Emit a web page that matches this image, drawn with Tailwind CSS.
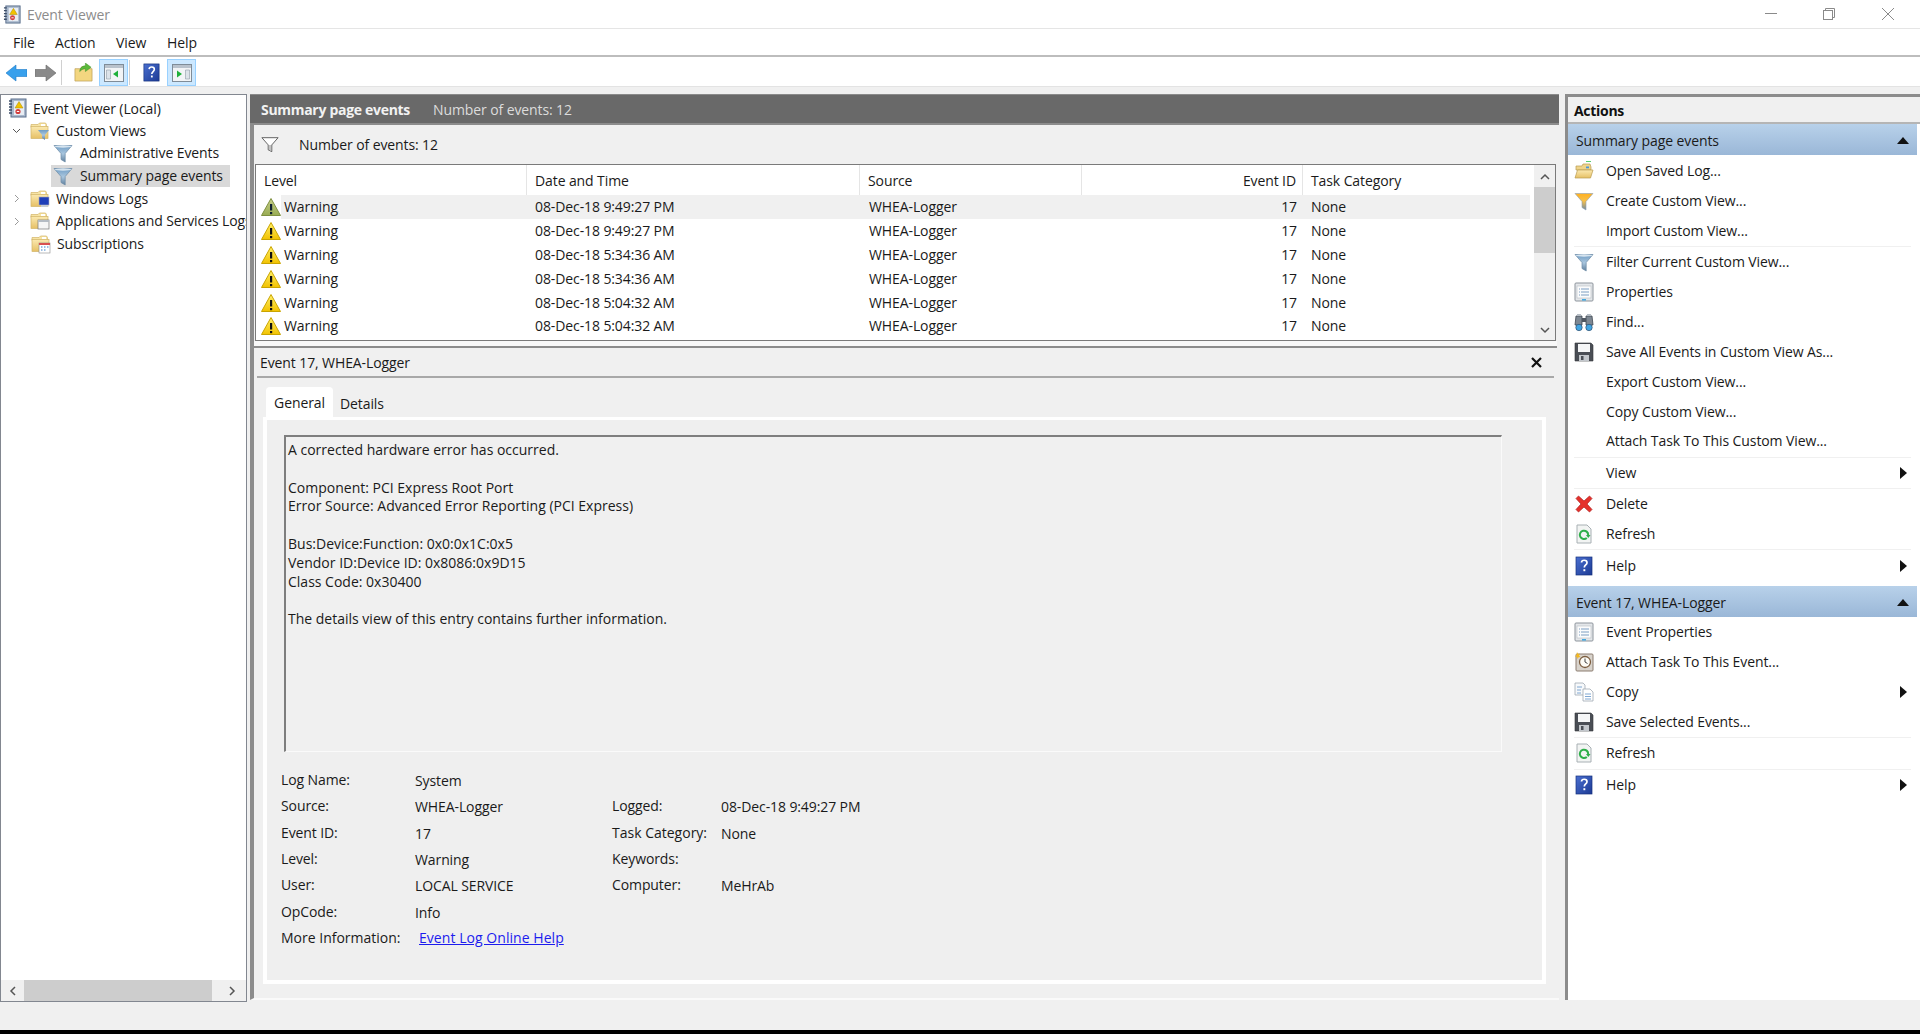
<!DOCTYPE html>
<html lang="en">
<head>
    <meta charset="UTF-8">
    <meta name="viewport" content="width=device-width, initial-scale=1.0">
    <script src="https://cdn.jsdelivr.net/npm/@tailwindcss/browser@4"></script>
    <title>Event Viewer</title>
</head>
<body class="h-screen w-screen overflow-hidden flex flex-col bg-[#f0f0f0] text-[14px] leading-none tracking-[-0.1px] text-[#1a1a1a] font-['Open_Sans','Liberation_Sans',sans-serif]">

    <svg class="absolute w-0 h-0">
        <defs>
            <linearGradient id="gFunnel" x1="0" y1="0" x2="0" y2="1"><stop offset="0" stop-color="#6f9cc4"/><stop offset="0.5" stop-color="#a9c6de"/><stop offset="1" stop-color="#5f7f9c"/></linearGradient>
            <linearGradient id="gOrange" x1="0" y1="0" x2="0" y2="1"><stop offset="0" stop-color="#ffb020"/><stop offset="0.45" stop-color="#f7c04a"/><stop offset="1" stop-color="#6f8aa5"/></linearGradient>
            <linearGradient id="gFolder" x1="0" y1="0" x2="0" y2="1"><stop offset="0" stop-color="#fbe9b0"/><stop offset="1" stop-color="#e6c065"/></linearGradient>
            <linearGradient id="gWarn" x1="0" y1="0" x2="0" y2="1"><stop offset="0" stop-color="#fff06a"/><stop offset="1" stop-color="#f2c200"/></linearGradient>
            <linearGradient id="gWarnSel" x1="0" y1="0" x2="0" y2="1"><stop offset="0" stop-color="#c7cf8a"/><stop offset="1" stop-color="#98ab52"/></linearGradient>
            <linearGradient id="gHelp" x1="0" y1="0" x2="1" y2="1"><stop offset="0" stop-color="#4a6fd0"/><stop offset="1" stop-color="#1c3a94"/></linearGradient>
        </defs>
        <symbol id="warn" viewBox="0 0 20 20"><path d="M10 1.5 19.5 18.5H.5z" fill="url(#gWarn)" stroke="#c9a400"/><rect x="9" y="7" width="2.2" height="6.5" fill="#111"/><rect x="9" y="15" width="2.2" height="2.2" fill="#111"/></symbol>
        <symbol id="warnSel" viewBox="0 0 20 20"><path d="M10 1.5 19.5 18.5H.5z" fill="url(#gWarnSel)" stroke="#7f9040"/><rect x="9" y="7" width="2.2" height="6.5" fill="#123"/><rect x="9" y="15" width="2.2" height="2.2" fill="#123"/></symbol>
        <symbol id="funnel" viewBox="0 0 20 20"><path d="M1 2.5h18L12.2 10.5v8.500L8 16.500v-6z" fill="url(#gFunnel)" stroke="#6d8ba6" stroke-width=".7"/><ellipse cx="10" cy="3.5" rx="8.5" ry="1.2" fill="#d6e4ef"/></symbol>
        <symbol id="funnelNew" viewBox="0 0 20 20"><path d="M1 2.5h18L12 10.5v8.500L8 16.500v-6z" fill="url(#gOrange)" stroke="#8ba0b5" stroke-width=".6"/></symbol>
        <symbol id="funnelOut" viewBox="0 0 20 20"><path d="M1 3h18L12 11v7.500L8 16.500V11z" fill="#fff" stroke="#555"/><path d="M10 11v6" stroke="#bbb" stroke-width="2"/></symbol>
        <symbol id="folder" viewBox="0 0 20 20"><path d="M1 3.5h7l1.500-1.500h6l1 1.500v3H1z" fill="#f7e4a4" stroke="#d2b468" stroke-width=".7"/><rect x="1" y="5.5" width="17" height="12" fill="url(#gFolder)" stroke="#d2b468" stroke-width=".7"/><rect x="11" y="3" width="4" height="2" fill="#fff"/></symbol>
        <symbol id="book" viewBox="0 0 20 20"><rect x="3" y="1" width="15" height="18" fill="#a9b8cc" stroke="#5b6f8c"/><rect x="6" y="3" width="10" height="14" fill="#e8edf3"/><path d="M1 3h3M1 6h3M1 9h3M1 12h3M1 15h3" stroke="#3c4e68" stroke-width="1.4"/><path d="M11 3.5 15 10H7z" fill="#f2c200" stroke="#a88700" stroke-width=".5"/><circle cx="10" cy="13.5" r="2.6" fill="#d23c3c"/><rect x="8.8" y="13" width="2.4" height="1" fill="#fff"/></symbol>
        <symbol id="help" viewBox="0 0 20 20"><rect x="2" y="1" width="16" height="18" fill="url(#gHelp)" stroke="#14307c" stroke-width=".7"/><path d="M7.5 6.5c.2-3 5.5-3 5.500.2 0 2.300-2.700 2.300-2.700 4.800" fill="none" stroke="#fff" stroke-width="1.7"/><rect x="9.4" y="13.2" width="1.9" height="2" fill="#fff"/></symbol>
        <symbol id="props" viewBox="0 0 20 20"><rect x="1" y="1" width="18" height="18" rx="1" fill="#e4e7ea" stroke="#8d949c"/><rect x="3" y="4" width="14" height="12" fill="#fbfcfd" stroke="#b7bdc4" stroke-width=".6"/><path d="M5 7h1M7 7h8M5 10h1M7 10h8M5 13h1M7 13h8" stroke="#6e94bb" stroke-width=".9"/><rect x="8" y="17" width="4" height="1.6" fill="#46a9e0"/></symbol>
        <symbol id="find" viewBox="0 0 20 20"><path d="M2 4h6v9H1z M12 4h6l1 9h-7z" fill="#7d8792" stroke="#3e4650" stroke-width=".8"/><rect x="8" y="6" width="4" height="4" fill="#4e5660"/><circle cx="5" cy="15.5" r="3.2" fill="#42a5e2" stroke="#2e4e6e" stroke-width=".7"/><circle cx="15" cy="15.5" r="3.2" fill="#42a5e2" stroke="#2e4e6e" stroke-width=".7"/><rect x="3" y="2" width="4" height="2" fill="#b5bcc4"/><rect x="13" y="2" width="4" height="2" fill="#b5bcc4"/></symbol>
        <symbol id="save" viewBox="0 0 20 20"><path d="M1 1h16l2 2v16H1z" fill="#4a4e55" stroke="#33363b" stroke-width=".6"/><rect x="4" y="2" width="12" height="8" fill="#f5f6f7"/><rect x="5" y="13" width="10" height="6" fill="#c3c7cc"/><rect x="7" y="14" width="2.5" height="4" fill="#4a4e55"/></symbol>
        <symbol id="open" viewBox="0 0 20 20"><path d="M2 5h6l1-2h7l1 3v3H2z" fill="#efd48a" stroke="#b99b50" stroke-width=".7"/><path d="M3.5 9H19l-2.500 8H1z" fill="url(#gFolder)" stroke="#b99b50" stroke-width=".7"/><rect x="12" y="5.5" width="3" height="1.8" fill="#4a97d8"/><rect x="12" y="0" width="5" height="1" fill="#55d070"/></symbol>
        <symbol id="del" viewBox="0 0 20 20"><path d="M2 4.5 4.500 2 10 7l5.500-5L18 4.500 13 10l5 5.500L15.500 18 10 13l-5.500 5L2 15.500 7 10z" fill="#e5312c" stroke="#b02020" stroke-width=".7"/></symbol>
        <symbol id="refresh" viewBox="0 0 20 20"><path d="M3 1h10l4 4v14H3z" fill="#f2f4f3" stroke="#a8b0b4"/><path d="M12.800 14a4.200 4.200 0 1 1 1.400-3" fill="none" stroke="#2fae4a" stroke-width="2"/><path d="M12 11h4.500l-2.200 3z" fill="#2fae4a"/></symbol>
        <symbol id="task" viewBox="0 0 20 20"><rect x="2" y="2" width="17" height="17" rx="1" fill="#d8d3cc" stroke="#8c7d70"/><circle cx="11" cy="10" r="5.5" fill="#fdfcf6" stroke="#7d5e40" stroke-width="1.3"/><path d="M11 6.500V10l2.500 1.500" fill="none" stroke="#444" stroke-width="1"/><path d="M3 0l1 2 2-.5-1 2 1.500 1.500-2 .2L3.500 7 3 4.800 1 4.500l1.500-1.500z" fill="#f3b820"/></symbol>
        <symbol id="copy" viewBox="0 0 20 20"><path d="M1 1h8l2 2v10H1z" fill="#f7f9fb" stroke="#9fa8b2" stroke-width=".8"/><path d="M9 7h7l3 3v9H9z" fill="#fff" stroke="#9fa8b2" stroke-width=".8"/><path d="M3 5h5M3 8h4M3 11h4M11 12h6M11 14.500h6M11 17h6" stroke="#5f92c8" stroke-width=".8"/></symbol>
        <symbol id="up" viewBox="0 0 20 20"><path d="M1 6h6l1-2h6l1 2h4v13H1z" fill="#f3d680" stroke="#b99b50" stroke-width=".7"/><path d="M6 9c0-4 3-6 6-6V0l6 4.500L12 9V6c-2 0-4 1-6 3z" fill="#5cba3a" stroke="#3c8a28" stroke-width=".5"/></symbol>
        <symbol id="paneL" viewBox="0 0 20 20"><rect x=".5" y="1.5" width="19" height="17" fill="#f2f4f6" stroke="#7f8c98"/><rect x="1" y="2" width="18" height="3" fill="#b9c2cc"/><path d="M2.500 7h4v9h-4z" fill="#dde3e9" stroke="#7f8c98" stroke-width=".5"/><path d="M14 7.500v7l-5-3.500z" fill="#1fb03a"/></symbol>
        <symbol id="paneR" viewBox="0 0 20 20"><rect x=".5" y="1.5" width="19" height="17" fill="#f2f4f6" stroke="#7f8c98"/><rect x="1" y="2" width="18" height="3" fill="#b9c2cc"/><path d="M13.500 7h4v9h-4z" fill="#dde3e9" stroke="#7f8c98" stroke-width=".5"/><path d="M5 7.500v7l5-3.500z" fill="#1fb03a"/></symbol>
        <symbol id="winlog" viewBox="0 0 20 20"><use href="#folder"/><rect x="9" y="8" width="10" height="8" fill="#1f3fb8" stroke="#aab" stroke-width=".6"/><path d="M11 16h7v2h-7z" fill="#c7ccd2"/></symbol>
        <symbol id="applog" viewBox="0 0 20 20"><use href="#folder"/><rect x="8" y="9" width="11" height="9" fill="#f6f6f6" stroke="#777" stroke-width=".7"/><rect x="8" y="9" width="11" height="2" fill="#b5bcc4"/></symbol>
        <symbol id="sublog" viewBox="0 0 20 20"><use href="#folder"/><rect x="8" y="9" width="11" height="10" fill="#fff" stroke="#8a8a8a" stroke-width=".6"/><rect x="8" y="9" width="11" height="2" fill="#d95050"/><path d="M10 13h1.500M13 13h1.500M16 13h1.500M10 16h1.500M13 16h1.500" stroke="#3a7fc8" stroke-width="1.2"/></symbol>
        <symbol id="customlog" viewBox="0 0 20 20"><use href="#folder"/><path d="M8 9h11l-4 5v5l-3-2v-3z" fill="url(#gFunnel)"/></symbol>
    </svg>

    <!-- title bar -->
    <header class="h-[29px] shrink-0 bg-white border-b border-[#e5e5e5] flex items-center">
        <svg class="w-[19px] h-[19px] ml-[3px]"><use href="#book"/></svg>
        <span class="ml-[5px] mt-[2px] text-[14px] text-[#8c8c8c]">Event Viewer</span>
        <div class="ml-auto flex items-center">
            <svg class="w-[12px] h-[12px] mr-[46px]" viewBox="0 0 12 12"><path d="M0 5.500h12" stroke="#8a8a8a"/></svg>
            <svg class="w-[12px] h-[12px] mr-[47px]" viewBox="0 0 12 12" fill="none" stroke="#8a8a8a"><rect x=".5" y="2.5" width="9" height="9"/><path d="M2.500 2.500v-2h9v9h-2"/></svg>
            <svg class="w-[12px] h-[12px] mr-[26px]" viewBox="0 0 12 12"><path d="M0 0l12 12M12 0L0 12" stroke="#8a8a8a"/></svg>
        </div>
    </header>

    <!-- menu -->
    <nav class="h-[28px] shrink-0 bg-white border-b-2 border-[#bdbdbd] flex items-center text-[14px] pt-[1px]">
        <span class="ml-[13px] w-[42px]">File</span>
        <span class="w-[61px]">Action</span>
        <span class="w-[51px]">View</span>
        <span>Help</span>
    </nav>

    <!-- toolbar -->
    <div class="h-[30px] shrink-0 bg-white border-b border-[#e3e3e3] flex items-center pt-[2px]">
        <svg class="w-[21px] h-[18px] ml-[6px]" viewBox="0 0 21 18"><path d="M0 9 10 1v4.500h11v7H10V17z" fill="#38a0ec" stroke="#1b78c8" stroke-width=".6"/></svg>
        <svg class="w-[21px] h-[18px] ml-[8px]" viewBox="0 0 21 18"><path d="M21 9 11 1v4.500H0v7h11V17z" fill="#8a8a8a" stroke="#666" stroke-width=".6"/></svg>
        <div class="w-px h-[25px] bg-[#d0d0d0] ml-[5px]"></div>
        <svg class="w-[19px] h-[19px] ml-[12px]"><use href="#up"/></svg>
        <div class="w-[29px] h-[27px] ml-[6px] bg-[#cce8ff] border border-[#99d1ff] flex items-center justify-center"><svg class="w-[20px] h-[20px]"><use href="#paneL"/></svg></div>
        <div class="w-px h-[25px] bg-[#d0d0d0] ml-[1px]"></div>
        <svg class="w-[19px] h-[21px] ml-[12px]"><use href="#help"/></svg>
        <div class="w-[29px] h-[27px] ml-[6px] bg-[#cce8ff] border border-[#99d1ff] flex items-center justify-center"><svg class="w-[20px] h-[20px]"><use href="#paneR"/></svg></div>
    </div>

    <!-- panes -->
    <main class="h-[915px] shrink-0 pt-[7px] flex">
        <!-- tree -->
        <aside class="w-[247px] h-[908px] shrink-0 bg-white border border-[#828790] flex flex-col overflow-hidden">
            <div class="flex-1 pt-[2px] text-[14px]">
                <div class="h-[22.6px] flex items-center pl-[7px] whitespace-nowrap"><svg class="w-[20px] h-[20px] shrink-0"><use href="#book"/></svg><span class="ml-[5px] mt-[1px]">Event Viewer (Local)</span></div>
                <div class="h-[22.6px] flex items-center pl-[11px] whitespace-nowrap"><svg class="w-[9px] h-[9px] shrink-0" viewBox="0 0 9 9"><path d="M1 3l3.500 3.500L8 3" fill="none" stroke="#555"/></svg><svg class="w-[20px] h-[20px] ml-[9px] shrink-0"><use href="#customlog"/></svg><span class="ml-[6px]">Custom Views</span></div>
                <div class="h-[22.6px] flex items-center pl-[52px] whitespace-nowrap"><svg class="w-[20px] h-[20px] shrink-0"><use href="#funnel"/></svg><span class="ml-[7px]">Administrative Events</span></div>
                <div class="h-[22.6px] flex items-center ml-[50px] pl-[2px] w-[179px] bg-[#d9d9d9] whitespace-nowrap"><svg class="w-[20px] h-[20px] shrink-0"><use href="#funnel"/></svg><span class="ml-[7px]">Summary page events</span></div>
                <div class="h-[22.6px] flex items-center pl-[11px] whitespace-nowrap"><svg class="w-[9px] h-[9px] shrink-0" viewBox="0 0 9 9"><path d="M3 1l3.500 3.500L3 8" fill="none" stroke="#999"/></svg><svg class="w-[20px] h-[20px] ml-[9px] shrink-0"><use href="#winlog"/></svg><span class="ml-[6px]">Windows Logs</span></div>
                <div class="h-[22.6px] flex items-center pl-[11px] whitespace-nowrap"><svg class="w-[9px] h-[9px] shrink-0" viewBox="0 0 9 9"><path d="M3 1l3.500 3.500L3 8" fill="none" stroke="#999"/></svg><svg class="w-[20px] h-[20px] ml-[9px] shrink-0"><use href="#applog"/></svg><span class="ml-[6px]">Applications and Services Logs</span></div>
                <div class="h-[22.6px] flex items-center pl-[30px] whitespace-nowrap"><svg class="w-[20px] h-[20px] shrink-0"><use href="#sublog"/></svg><span class="ml-[6px]">Subscriptions</span></div>
            </div>
            <div class="h-[21px] shrink-0 bg-[#f0f0f0] flex items-center">
                <svg class="w-[8px] h-[10px] ml-[8px]" viewBox="0 0 8 10"><path d="M6 1 2 5l4 4" fill="none" stroke="#555" stroke-width="1.5"/></svg>
                <div class="w-[188px] h-full ml-[7px] bg-[#cdcdcd]"></div>
                <svg class="w-[8px] h-[10px] ml-[16px]" viewBox="0 0 8 10"><path d="M2 1l4 4-4 4" fill="none" stroke="#555" stroke-width="1.5"/></svg>
            </div>
        </aside>

        <!-- centre -->
        <section class="w-[1309px] h-[906px] ml-[3px] shrink-0 flex flex-col">
            <div class="h-[29px] shrink-0 bg-[#696969] border-t border-[#8a8a8a] flex items-center text-[14px] pt-[2px]">
                <b class="ml-[11px] w-[172px] font-bold text-[#f2f2f2] tracking-[-0.3px]">Summary page events</b>
                <span class="text-[#dcdcdc]">Number of events: 12</span>
            </div>
            <div class="flex-1 flex flex-col border-l-[4px] border-t-[2px] border-b-2 border-[#8c8c8c] border-b-[#fafafa] pr-[2px]">
                <div class="h-[39px] shrink-0 flex items-center">
                    <svg class="w-[20px] h-[18px] ml-[6px] -mt-[2px]"><use href="#funnelOut"/></svg>
                    <span class="ml-[19px]">Number of events: 12</span>
                </div>
                <!-- events table -->
                <div class="h-[177px] shrink-0 ml-[1px] mr-[1px] bg-white border border-[#7a7a7a] flex">
                    <div class="flex-1 flex flex-col">
                        <div class="h-[30px] shrink-0 grid grid-cols-[271px_333px_222px_221px_1fr] items-center">
                            <div class="pl-[8px] pt-[2px] border-r border-[#e5e5e5] h-full flex items-center">Level</div>
                            <div class="pl-[8px] pt-[2px] border-r border-[#e5e5e5] h-full flex items-center">Date and Time</div>
                            <div class="pl-[8px] pt-[2px] border-r border-[#e5e5e5] h-full flex items-center">Source</div>
                            <div class="pr-[6px] pt-[2px] border-r border-[#e5e5e5] h-full flex items-center justify-end">Event ID</div>
                            <div class="pl-[8px] pt-[2px] h-full flex items-center">Task Category</div>
                        </div>
                        <div class="h-[23.9px] flex items-center">
                            <svg class="w-[20px] h-[20px] ml-[5px] shrink-0"><use href="#warnSel"/></svg>
                            <div class="flex-1 mr-[4px] h-full bg-[#f0f0f0] grid grid-cols-[246px_333px_222px_221px_1fr] items-center"><span class="pl-[3px]">Warning</span><span class="pl-[8px]">08-Dec-18 9:49:27 PM</span><span class="pl-[9px]">WHEA-Logger</span><span class="text-right pr-[6px]">17</span><span class="pl-[8px]">None</span></div>
                        </div>
                        <div class="h-[23.9px] flex items-center">
                            <svg class="w-[20px] h-[20px] ml-[5px] shrink-0"><use href="#warn"/></svg>
                            <div class="flex-1 mr-[4px] h-full grid grid-cols-[246px_333px_222px_221px_1fr] items-center"><span class="pl-[3px]">Warning</span><span class="pl-[8px]">08-Dec-18 9:49:27 PM</span><span class="pl-[9px]">WHEA-Logger</span><span class="text-right pr-[6px]">17</span><span class="pl-[8px]">None</span></div>
                        </div>
                        <div class="h-[23.9px] flex items-center">
                            <svg class="w-[20px] h-[20px] ml-[5px] shrink-0"><use href="#warn"/></svg>
                            <div class="flex-1 mr-[4px] h-full grid grid-cols-[246px_333px_222px_221px_1fr] items-center"><span class="pl-[3px]">Warning</span><span class="pl-[8px]">08-Dec-18 5:34:36 AM</span><span class="pl-[9px]">WHEA-Logger</span><span class="text-right pr-[6px]">17</span><span class="pl-[8px]">None</span></div>
                        </div>
                        <div class="h-[23.9px] flex items-center">
                            <svg class="w-[20px] h-[20px] ml-[5px] shrink-0"><use href="#warn"/></svg>
                            <div class="flex-1 mr-[4px] h-full grid grid-cols-[246px_333px_222px_221px_1fr] items-center"><span class="pl-[3px]">Warning</span><span class="pl-[8px]">08-Dec-18 5:34:36 AM</span><span class="pl-[9px]">WHEA-Logger</span><span class="text-right pr-[6px]">17</span><span class="pl-[8px]">None</span></div>
                        </div>
                        <div class="h-[23.9px] flex items-center">
                            <svg class="w-[20px] h-[20px] ml-[5px] shrink-0"><use href="#warn"/></svg>
                            <div class="flex-1 mr-[4px] h-full grid grid-cols-[246px_333px_222px_221px_1fr] items-center"><span class="pl-[3px]">Warning</span><span class="pl-[8px]">08-Dec-18 5:04:32 AM</span><span class="pl-[9px]">WHEA-Logger</span><span class="text-right pr-[6px]">17</span><span class="pl-[8px]">None</span></div>
                        </div>
                        <div class="h-[23.9px] flex items-center">
                            <svg class="w-[20px] h-[20px] ml-[5px] shrink-0"><use href="#warn"/></svg>
                            <div class="flex-1 mr-[4px] h-full grid grid-cols-[246px_333px_222px_221px_1fr] items-center"><span class="pl-[3px]">Warning</span><span class="pl-[8px]">08-Dec-18 5:04:32 AM</span><span class="pl-[9px]">WHEA-Logger</span><span class="text-right pr-[6px]">17</span><span class="pl-[8px]">None</span></div>
                        </div>
                    </div>
                    <!-- table scrollbar -->
                    <div class="w-[21px] shrink-0 bg-[#f0f0f0] flex flex-col items-center">
                        <svg class="w-[10px] h-[8px] mt-[8px] shrink-0" viewBox="0 0 10 8"><path d="M1 6l4-4 4 4" fill="none" stroke="#555" stroke-width="1.5"/></svg>
                        <div class="w-full h-[66px] mt-[6px] bg-[#cdcdcd]"></div>
                        <svg class="w-[10px] h-[8px] mt-auto mb-[6px] shrink-0" viewBox="0 0 10 8"><path d="M1 2l4 4 4-4" fill="none" stroke="#555" stroke-width="1.5"/></svg>
                    </div>
                </div>
                <div class="h-[5px] shrink-0 bg-[#f8f8f8]"></div>
                <!-- event details -->
                <div class="flex-1 flex flex-col border-t-2 border-[#8c8c8c]">
                    <div class="h-[30px] shrink-0 mx-[3px] flex items-center justify-between border-b-2 border-[#a8a8a8]">
                        <span class="ml-[3px] mt-[2px]">Event 17, WHEA-Logger</span>
                        <svg class="w-[11px] h-[11px] mr-[12px]" viewBox="0 0 11 11"><path d="M1 1l9 9M10 1l-9 9" stroke="#111" stroke-width="2.2"/></svg>
                    </div>
                    <div class="flex h-[32px] shrink-0 mt-[9px] ml-[12px]">
                        <div class="w-[67px] h-full bg-white rounded-t-sm flex items-center justify-center">General</div>
                        <div class="ml-[7px] flex items-center pt-[2px]">Details</div>
                    </div>
                    <div class="w-[1283px] h-[567px] -mt-[2px] ml-[9px] bg-[#efefef] border-4 border-white border-t-[3px] pl-[17px]">
                        <div class="w-[1218px] h-[317px] mt-[15px] border-l-2 border-t-2 border-r border-b border-[#7e7e7e] border-r-[#fafafa] border-b-[#fafafa] bg-[#f0f0f0] pt-[4px] pl-[2px] leading-[18.8px] tracking-normal">
                            <p>A corrected hardware error has occurred.</p>
                            <p class="h-[18.8px]"></p>
                            <p>Component: PCI Express Root Port</p>
                            <p>Error Source: Advanced Error Reporting (PCI Express)</p>
                            <p class="h-[18.8px]"></p>
                            <p>Bus:Device:Function: 0x0:0x1C:0x5</p>
                            <p>Vendor ID:Device ID: 0x8086:0x9D15</p>
                            <p>Class Code: 0x30400</p>
                            <p class="h-[18.8px]"></p>
                            <p>The details view of this entry contains further information.</p>
                        </div>
                        <div class="mt-[16px] -ml-[3px] grid grid-cols-[134px_197px_109px_1fr] auto-rows-[26.3px] items-center">
                            <span class="-mt-[2px]">Log Name:</span><span>System</span><span></span><span></span>
                            <span class="-mt-[2px]">Source:</span><span>WHEA-Logger</span><span class="-mt-[2px]">Logged:</span><span>08-Dec-18 9:49:27 PM</span>
                            <span class="-mt-[2px]">Event ID:</span><span>17</span><span class="-mt-[2px] tracking-normal">Task Category:</span><span>None</span>
                            <span class="-mt-[2px]">Level:</span><span>Warning</span><span class="-mt-[2px]">Keywords:</span><span></span>
                            <span class="-mt-[2px]">User:</span><span>LOCAL SERVICE</span><span class="-mt-[2px]">Computer:</span><span>MeHrAb</span>
                            <span class="-mt-[2px]">OpCode:</span><span>Info</span><span></span><span></span>
                            <span class="-mt-[2px] tracking-normal">More Information:</span><a class="ml-[4px] col-span-3 -mt-[2px] text-[#1c1cee] underline tracking-[0.05px]">Event Log Online Help</a>
                        </div>
                    </div>
                </div>
            </div>
        </section>

        <!-- actions -->
        <aside class="w-[355px] h-[906px] ml-[6px] shrink-0 flex flex-col border-l-[3px] border-t-[3px] border-[#8c8c8c] bg-white">
            <div class="h-[27px] shrink-0 bg-[#f0f0f0] border-b-2 border-[#b5b5b5] flex items-center pl-[6px] pt-[2px]"><b class="font-bold text-[#111] tracking-[-0.3px]">Actions</b></div>
            <div class="h-[31px] shrink-0 mr-[3px] bg-gradient-to-b from-[#b8d1ea] to-[#9ab7d7] flex items-center justify-between pl-[8px] pr-[8px] pt-[2px]"><span>Summary page events</span><svg class="w-[12px] h-[7px]" viewBox="0 0 12 7"><path d="M0 7 6 0l6 7z" fill="#111"/></svg></div>
            <div class="flex flex-col pt-[1px] mr-[3px]">
                <div class="h-[29.9px] flex items-center pl-[6px]"><svg class="w-[20px] h-[20px]"><use href="#open"/></svg><span class="ml-[12px]">Open Saved Log...</span></div>
                <div class="h-[29.9px] flex items-center pl-[6px]"><svg class="w-[20px] h-[20px]"><use href="#funnelNew"/></svg><span class="ml-[12px]">Create Custom View...</span></div>
                <div class="h-[29.9px] flex items-center pl-[38px]">Import Custom View...</div>
                <div class="h-px mx-[6px] my-[0.25px] bg-[#f0f0f0]"></div>
                <div class="h-[29.9px] flex items-center pl-[6px]"><svg class="w-[20px] h-[20px]"><use href="#funnel"/></svg><span class="ml-[12px]">Filter Current Custom View...</span></div>
                <div class="h-[29.9px] flex items-center pl-[6px]"><svg class="w-[20px] h-[20px]"><use href="#props"/></svg><span class="ml-[12px]">Properties</span></div>
                <div class="h-[29.9px] flex items-center pl-[6px]"><svg class="w-[20px] h-[20px]"><use href="#find"/></svg><span class="ml-[12px]">Find...</span></div>
                <div class="h-[29.9px] flex items-center pl-[6px]"><svg class="w-[20px] h-[20px]"><use href="#save"/></svg><span class="ml-[12px]">Save All Events in Custom View As...</span></div>
                <div class="h-[29.9px] flex items-center pl-[38px]">Export Custom View...</div>
                <div class="h-[29.9px] flex items-center pl-[38px]">Copy Custom View...</div>
                <div class="h-[29.9px] flex items-center pl-[38px]">Attach Task To This Custom View...</div>
                <div class="h-px mx-[6px] my-[0.25px] bg-[#f0f0f0]"></div>
                <div class="h-[29.9px] flex items-center justify-between pl-[38px] pr-[10px]"><span>View</span><svg class="w-[7px] h-[12px]" viewBox="0 0 7 12"><path d="M0 0l7 6-7 6z" fill="#111"/></svg></div>
                <div class="h-px mx-[6px] my-[0.25px] bg-[#f0f0f0]"></div>
                <div class="h-[29.9px] flex items-center pl-[6px]"><svg class="w-[20px] h-[20px]"><use href="#del"/></svg><span class="ml-[12px]">Delete</span></div>
                <div class="h-[29.9px] flex items-center pl-[6px]"><svg class="w-[20px] h-[20px]"><use href="#refresh"/></svg><span class="ml-[12px]">Refresh</span></div>
                <div class="h-px mx-[6px] my-[0.25px] bg-[#f0f0f0]"></div>
                <div class="h-[29.9px] flex items-center justify-between pl-[6px] pr-[10px]"><div class="flex items-center"><svg class="w-[20px] h-[20px]"><use href="#help"/></svg><span class="ml-[12px]">Help</span></div><svg class="w-[7px] h-[12px]" viewBox="0 0 7 12"><path d="M0 0l7 6-7 6z" fill="#111"/></svg></div>
            </div>
            <div class="h-[31px] shrink-0 mt-[6px] mr-[3px] bg-gradient-to-b from-[#b8d1ea] to-[#9ab7d7] flex items-center justify-between pl-[8px] pr-[8px] pt-[2px]"><span>Event 17, WHEA-Logger</span><svg class="w-[12px] h-[7px]" viewBox="0 0 12 7"><path d="M0 7 6 0l6 7z" fill="#111"/></svg></div>
            <div class="flex flex-col mr-[3px]">
                <div class="h-[29.9px] flex items-center pl-[6px]"><svg class="w-[20px] h-[20px]"><use href="#props"/></svg><span class="ml-[12px]">Event Properties</span></div>
                <div class="h-[29.9px] flex items-center pl-[6px]"><svg class="w-[20px] h-[20px]"><use href="#task"/></svg><span class="ml-[12px]">Attach Task To This Event...</span></div>
                <div class="h-[29.9px] flex items-center justify-between pl-[6px] pr-[10px]"><div class="flex items-center"><svg class="w-[20px] h-[20px]"><use href="#copy"/></svg><span class="ml-[12px]">Copy</span></div><svg class="w-[7px] h-[12px]" viewBox="0 0 7 12"><path d="M0 0l7 6-7 6z" fill="#111"/></svg></div>
                <div class="h-[29.9px] flex items-center pl-[6px]"><svg class="w-[20px] h-[20px]"><use href="#save"/></svg><span class="ml-[12px]">Save Selected Events...</span></div>
                <div class="h-px mx-[6px] my-[0.25px] bg-[#f0f0f0]"></div>
                <div class="h-[29.9px] flex items-center pl-[6px]"><svg class="w-[20px] h-[20px]"><use href="#refresh"/></svg><span class="ml-[12px]">Refresh</span></div>
                <div class="h-px mx-[6px] my-[0.25px] bg-[#f0f0f0]"></div>
                <div class="h-[29.9px] flex items-center justify-between pl-[6px] pr-[10px]"><div class="flex items-center"><svg class="w-[20px] h-[20px]"><use href="#help"/></svg><span class="ml-[12px]">Help</span></div><svg class="w-[7px] h-[12px]" viewBox="0 0 7 12"><path d="M0 0l7 6-7 6z" fill="#111"/></svg></div>
            </div>
        </aside>
    </main>

    <footer class="h-[28px] shrink-0 bg-[#f0f0f0]"></footer>
    <div class="h-[4px] shrink-0 bg-black"></div>
</body>
</html>
